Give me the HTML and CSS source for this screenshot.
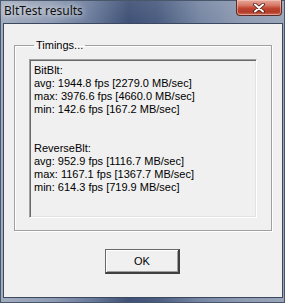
FILE: index.html
```html
<!DOCTYPE html>
<html>
<head>
<meta charset="utf-8">
<link rel="stylesheet" href="styles.css">
</head>
<body>
<div class="window">
  <div class="titlebar">
    <span class="title">BltTest results</span>
    <div class="close">
      <svg width="14" height="10" viewBox="0 0 14 10">
        <path d="M3 1.5 L11 8.5 M11 1.5 L3 8.5" stroke="#4a1a14" stroke-width="3.6" stroke-linecap="round"/>
        <path d="M3 1.5 L11 8.5 M11 1.5 L3 8.5" stroke="#ffffff" stroke-width="2" stroke-linecap="round"/>
      </svg>
    </div>
  </div>
  <div class="client">
    <fieldset class="group">
      <legend>Timings...</legend>
      <div class="results">
        <p class="block">BitBlt:<br>avg: 1944.8 fps [2279.0 MB/sec]<br>max: 3976.6 fps [4660.0 MB/sec]<br>min: 142.6 fps [167.2 MB/sec]</p>
        <p class="block">ReverseBlt:<br>avg: 952.9 fps [1116.7 MB/sec]<br>max: 1167.1 fps [1367.7 MB/sec]<br>min: 614.3 fps [719.9 MB/sec]</p>
      </div>
    </fieldset>
    <div class="actions">
      <button class="ok">OK</button>
    </div>
  </div>
</div>
</body>
</html>
```

FILE: styles.css
```css
html, body {
  margin: 0;
  padding: 0;
}
body {
  width: 285px;
  height: 303px;
  overflow: hidden;
  font-family: "Liberation Sans", Arial, sans-serif;
  font-size: 11px;
  color: #000;
}
.window {
  box-sizing: border-box;
  width: 285px;
  height: 303px;
  display: flex;
  flex-direction: column;
  padding: 0 2px 5px 3px;
  background:
    linear-gradient(180deg, rgba(255,255,255,0.08) 0px, rgba(255,255,255,0) 23px),
    linear-gradient(90deg, #a3adc0 0%, #8e9bb3 18%, #6a7b9b 32%, #3f5176 45%, #4a5c80 55%, #7686a3 70%, #8f9bb2 85%, #9aa5b9 100%);
  box-shadow: inset 0 0 0 1px #4a566a;
}
.titlebar {
  height: 23px;
  display: flex;
  align-items: flex-start;
  justify-content: space-between;
  flex-shrink: 0;
}
.title {
  font-family: "Noto Sans", "Open Sans", sans-serif;
  font-size: 12px;
  line-height: 16px;
  margin-top: 3px;
  margin-left: 1px;
  color: #111;
  text-shadow: 0 0 6px rgba(255,255,255,0.9), 0 0 10px rgba(255,255,255,0.6);
}
.close {
  box-sizing: border-box;
  width: 46px;
  height: 16px;
  margin-right: 1px;
  border: 1px solid #5b2d2a;
  border-top: none;
  border-radius: 0 0 4px 4px;
  background: linear-gradient(180deg, #e6a89a 0%, #d77a68 35%, #c04532 55%, #b03a28 80%, #d0705c 100%);
  box-shadow: inset 0 0 0 1px rgba(255,220,210,0.45);
  display: flex;
  align-items: center;
  justify-content: center;
}
.client {
  flex: 1;
  background: #f0f0f0;
  border: 1px solid #3c4860;
  display: flex;
  flex-direction: column;
}
.group {
  margin: 15px 10px 0 10px;
  padding: 7px 14px 12px 14px;
  border: 1px solid #a0a0a0;
  box-shadow: inset 1px 1px 0 #fff, 1px 1px 0 #fff;
  min-width: 0;
}
.group legend {
  padding: 0 2px;
  margin-left: 5px;
  font-size: 11px;
  line-height: 13px;
}
.results {
  height: 153px;
  padding: 4px 4px 0 4px;
  border-top: 1px solid #a0a0a0;
  border-left: 1px solid #a0a0a0;
  border-right: 1px solid #fff;
  border-bottom: 1px solid #fff;
  box-shadow: inset 1px 1px 0 #696969, inset -1px -1px 0 #e3e3e3;
}
.block {
  margin: 0 0 26px 0;
  line-height: 13px;
}
.actions {
  display: flex;
  justify-content: center;
  margin-top: 18px;
}
.ok {
  box-sizing: border-box;
  width: 75px;
  height: 25px;
  margin-right: 1px;
  font-family: "Liberation Sans", Arial, sans-serif;
  font-size: 11px;
  color: #000;
  background: #f0f0f0;
  border: 1px solid #696969;
  border-right: 2px solid #404040;
  border-bottom: 2px solid #404040;
  box-shadow: inset 1px 1px 0 #fff, inset -1px -1px 0 #a0a0a0;
  padding: 0;
}
```
